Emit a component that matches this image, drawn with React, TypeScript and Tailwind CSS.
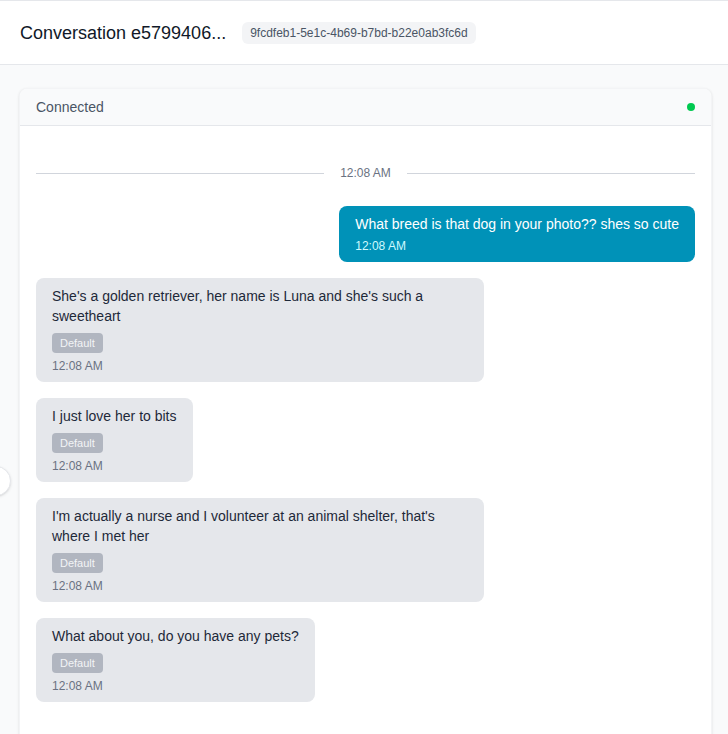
import React from 'react';

interface Message {
  id: number;
  text: string;
  time: string;
  fromUser: boolean;
  tag?: string;
}

const messages: Message[] = [
  { id: 1, text: 'What breed is that dog in your photo?? shes so cute', time: '12:08 AM', fromUser: true },
  { id: 2, text: "She's a golden retriever, her name is Luna and she's such a sweetheart", time: '12:08 AM', fromUser: false, tag: 'Default' },
  { id: 3, text: 'I just love her to bits', time: '12:08 AM', fromUser: false, tag: 'Default' },
  { id: 4, text: "I'm actually a nurse and I volunteer at an animal shelter, that's where I met her", time: '12:08 AM', fromUser: false, tag: 'Default' },
  { id: 5, text: 'What about you, do you have any pets?', time: '12:08 AM', fromUser: false, tag: 'Default' },
];

function Bubble({ msg }: { msg: Message }) {
  if (msg.fromUser) {
    return (
      <div className="flex justify-end">
        <div className="max-w-md rounded-lg bg-[#0092b8] px-4 py-2 text-white">
          <p className="text-sm leading-5">{msg.text}</p>
          <p className="mt-1 text-xs leading-4 text-cyan-100">{msg.time}</p>
        </div>
      </div>
    );
  }
  return (
    <div className="flex justify-start">
      <div className="max-w-md rounded-lg bg-gray-200 px-4 py-2 text-gray-800">
        <p className="text-sm leading-5">{msg.text}</p>
        {msg.tag && (
          <div className="mt-[7px] flex">
            <span className="rounded bg-[#b1b6c0] px-2 text-[11px] leading-5 text-gray-100">{msg.tag}</span>
          </div>
        )}
        <p className="mt-[5px] text-xs leading-4 text-gray-500">{msg.time}</p>
      </div>
    </div>
  );
}

export default function App() {
  return (
    <div className="min-h-[734px] border-t border-gray-200 bg-gray-50 font-['Liberation_Sans',Arial,sans-serif]">
      <header className="flex h-16 items-center gap-4 border-b border-gray-200 bg-white px-5">
        <h1 className="text-lg text-gray-900">Conversation e5799406...</h1>
        <span className="rounded-md bg-gray-100 px-2 py-1 text-xs leading-[14px] text-gray-600">
          9fcdfeb1-5e1c-4b69-b7bd-b22e0ab3fc6d
        </span>
      </header>

      <main className="relative pt-[23px] pl-[19px] pr-4">
        <button className="absolute top-[401px] -left-[19px] h-[30px] w-[30px] rounded-full border border-gray-200 bg-white shadow-sm" />

        <div className="overflow-hidden rounded-lg border border-gray-100 bg-white shadow-sm">
          <div className="flex h-[37px] items-center justify-between border-b border-gray-200 bg-gray-50 px-4">
            <span className="text-sm text-gray-600">Connected</span>
            <span className="h-2 w-2 rounded-full bg-[#00c950]" />
          </div>

          <div className="px-4 pb-10">
            <div className="mt-[39px] mb-[25px] flex items-center gap-4">
              <div className="h-px flex-1 bg-gray-300" />
              <span className="text-xs leading-4 text-gray-500">12:08 AM</span>
              <div className="h-px flex-1 bg-gray-300" />
            </div>

            <div className="flex flex-col gap-4">
              {messages.map((m) => (
                <Bubble key={m.id} msg={m} />
              ))}
            </div>
          </div>
        </div>
      </main>
    </div>
  );
}
